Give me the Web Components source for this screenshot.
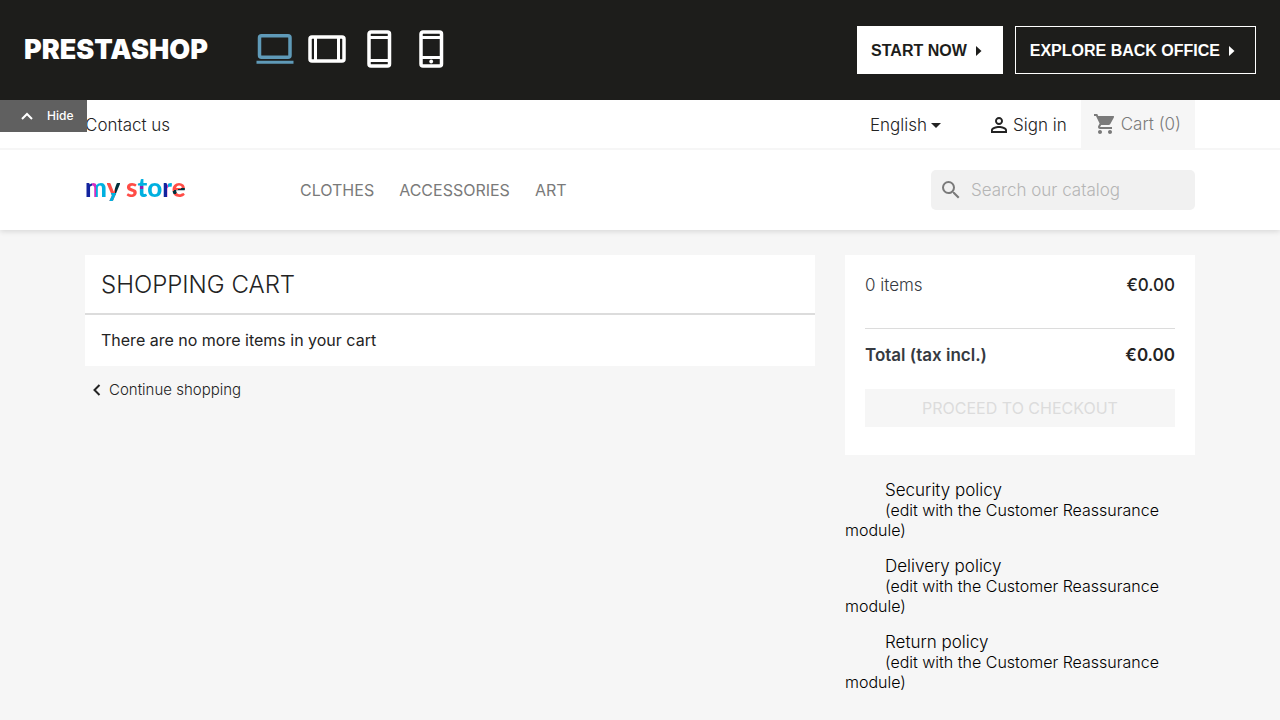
<!DOCTYPE html>
<html lang="en">
<head>
<meta charset="utf-8">
<meta name="viewport" content="width=device-width, initial-scale=1">
<title>Cart - My Store</title>
<style>
  body {
    --ink: #232323;
    --muted: #7a7a7a;
    --page: #f6f6f6;
    margin: 0;
    min-height: 100vh;
    background: var(--page);
    color: var(--ink);
    font: 300 17px/20px Inter, "Noto Sans", sans-serif;
  }
</style>
</head>
<body>
<demo-banner></demo-banner>
<store-header></store-header>
<cart-page></cart-page>

<script>
const define = (name, html) => customElements.define(name, class extends HTMLElement {
  constructor() {
    super();
    const template = document.createElement('template');
    template.innerHTML = html;
    this.attachShadow({ mode: 'open' }).append(template.content.cloneNode(true));
  }
});

define('page-container', `
  <style>
    :host { display: block; box-sizing: border-box; width: 100%; max-width: 1140px; margin: 0 auto; padding: 0 15px; }
  </style>
  <slot></slot>`);

define('demo-link', `
  <style>
    :host { display: block; }
    a { display: flex; align-items: center; gap: 9px; box-sizing: border-box; height: 48px; padding: 2px 20px 0 14px;
        border: 1px solid #fff; color: #fff; text-decoration: none; white-space: nowrap;
        font: bold 16px/20px "Liberation Sans", Arial, sans-serif; }
    :host([primary]) a { background: #fff; color: #1d1d1b; padding-left: 13px; }
    svg { display: block; }
  </style>
  <a href="#"><slot></slot><svg width="6" height="10" viewBox="0 0 6 10" aria-hidden="true"><path d="M0 0l5.5 5L0 10z" fill="currentColor"/></svg></a>`);

define('device-picker', `
  <style>
    :host { display: flex; align-items: center; gap: 12px; }
    button { display: block; width: 40px; height: 40px; padding: 0; border: 0; background: none; color: #fff; }
    button[aria-pressed="true"] { color: #5f9ab8; }
    svg { display: block; fill: none; stroke: currentColor; stroke-width: 3; }
    rect { stroke-width: 3.5; }
  </style>
  <button type="button" aria-label="Desktop" aria-pressed="true">
    <svg width="40" height="40" viewBox="0 0 40 40"><rect x="4.500" y="5.700" width="30.500" height="21.500" rx="2"/><path d="M1.500 32.300h37"/></svg>
  </button>
  <button type="button" aria-label="Tablet landscape">
    <svg width="40" height="40" viewBox="0 0 40 40"><rect x="3" y="7" width="34" height="24" rx="2"/><path d="M8.500 7v24M31.500 7v24"/></svg>
  </button>
  <button type="button" aria-label="Tablet portrait">
    <svg width="40" height="40" viewBox="0 0 40 40"><rect x="10" y="2" width="20.500" height="34" rx="2"/><path d="M10 7.500h20M10 30.500h20"/></svg>
  </button>
  <button type="button" aria-label="Mobile">
    <svg width="40" height="40" viewBox="0 0 40 40"><rect x="10" y="2" width="20.500" height="34" rx="2"/><path d="M10 7.500h20M10 27.500h20"/><circle cx="20.200" cy="31.500" r="1.900" fill="currentColor" stroke="none"/></svg>
  </button>`);

define('demo-banner', `
  <style>
    :host { display: block; position: relative; z-index: 1; background: #1d1d1b; color: #fff; }
    header { display: flex; align-items: center; box-sizing: border-box; min-height: 100px; padding: 0 24px; }
    .brand { color: inherit; text-decoration: none; font-size: 27px; font-weight: 900; line-height: 32px; }
    device-picker { margin-left: 47px; }
    nav { display: flex; gap: 12px; margin-left: auto; }
    .hide { position: absolute; left: 0; top: 100%; display: flex; align-items: center; gap: 14px;
            width: 87px; height: 32px; padding: 0 0 0 21px; border: 0; background: #606060; color: #fff;
            font: 500 12px/16px Inter, sans-serif; }
  </style>
  <header>
    <a class="brand" href="#">PRESTASHOP</a>
    <device-picker></device-picker>
    <nav aria-label="Demo">
      <demo-link primary>START NOW</demo-link>
      <demo-link>EXPLORE BACK OFFICE</demo-link>
    </nav>
  </header>
  <button class="hide" type="button">
    <svg width="12" height="8" viewBox="0 0 12 8" aria-hidden="true"><path d="M1 7l5-5 5 5" fill="none" stroke="currentColor" stroke-width="2"/></svg>Hide
  </button>`);

define('top-bar', `
  <style>
    :host { display: block; border-bottom: 2px solid var(--page); }
    .row { display: flex; align-items: center; height: 48px; }
    a { color: inherit; text-decoration: none; }
    .contact, .lang, .user { padding-top: 2px; }
    .end { display: flex; align-items: center; height: 100%; margin-left: auto; }
    .lang { display: flex; align-items: center; gap: 4px; margin-right: 49px; }
    select { appearance: none; field-sizing: content; padding: 0; border: 0; background: none; color: inherit; font: inherit; }
    .user { display: flex; align-items: center; gap: 5px; margin-right: 14px; }
    .cart { display: flex; align-items: center; gap: 4px; height: 100%; padding: 0 14px 0 12px; background: var(--page); color: var(--muted); }
    svg { display: block; fill: currentColor; }
  </style>
  <page-container>
    <div class="row">
      <a class="contact" href="#">Contact us</a>
      <div class="end">
        <div class="lang">
          <select aria-label="Language"><option>English</option></select>
          <svg width="10" height="5" viewBox="0 0 10 5" aria-hidden="true"><path d="M0 0h10L5 5z"/></svg>
        </div>
        <a class="user" href="#">
          <svg width="18" height="18" viewBox="3 3 18 18" aria-hidden="true"><path d="M12 5.900a2.100 2.100 0 1 1 0 4.200 2.100 2.100 0 0 1 0-4.200m0 9c2.970 0 6.100 1.460 6.100 2.100v1.100H5.900V17c0-.64 3.130-2.100 6.100-2.100M12 4C9.790 4 8 5.790 8 8s1.790 4 4 4 4-1.790 4-4-1.790-4-4-4zm0 9c-2.670 0-8 1.340-8 4v3h16v-3c0-2.660-5.330-4-8-4z"/></svg>
          Sign in
        </a>
        <a class="cart" href="#">
          <svg width="24" height="24" viewBox="0 0 24 24" aria-hidden="true"><path d="M7 18c-1.100 0-1.990.9-1.990 2S5.900 22 7 22s2-.9 2-2-.9-2-2-2zM1 2v2h2l3.600 7.590-1.350 2.450c-.16.28-.25.61-.25.960 0 1.100.9 2 2 2h12v-2H7.420c-.14 0-.25-.11-.25-.25l.03-.12.900-1.630h7.450c.75 0 1.410-.41 1.750-1.030l3.580-6.490A1 1 0 0 0 20 4H5.210l-.94-2H1zm16 16c-1.100 0-1.990.9-1.990 2s.89 2 1.990 2 2-.9 2-2-.9-2-2-2z"/></svg>
          Cart (0)
        </a>
      </div>
    </div>
  </page-container>`);

define('store-logo', `
  <style>
    :host { display: block; }
    a { display: block; padding-bottom: 6px; text-decoration: none; white-space: nowrap; font: 900 26px/32px Lato, sans-serif; }
    span { color: transparent; background-clip: text; -webkit-background-clip: text; }
    .m { background-image: linear-gradient(90deg, #12239e 30%, #d12fc0 30% 52%, #00b0e0 52%); }
    .y { background-image: linear-gradient(0deg, #00b0e0 30%, transparent 30%), linear-gradient(90deg, #ff4c46 60%, #01303b 60%); }
    .s { background-image: linear-gradient(#ff4c46, #ff4c46); }
    .t { background-image: linear-gradient(#00b0e0 46%, #8a1fb0 46% 56%, #00b0e0 56%); }
    .o { background-image: linear-gradient(#00b0e0, #00b0e0); }
    .r { background-image: linear-gradient(90deg, #12239e 55%, #d12fc0 55% 65%, #00b0e0 65%); }
    .e { background-image: linear-gradient(165deg, #ff4c46 56%, #01303b 56% 66%, #ff4c46 66%); }
  </style>
  <a href="#" aria-label="my store"><span class="m">m</span><span class="y">y</span> <span class="s">s</span><span class="t">t</span><span class="o">o</span><span class="r">r</span><span class="e">e</span></a>`);

define('search-box', `
  <style>
    :host { display: block; min-width: 0; }
    label { display: flex; align-items: center; gap: 8px; box-sizing: border-box; height: 40px; padding: 0 8px; border-radius: 5px; background: #f1f1f1; color: var(--muted); }
    svg { display: block; flex: none; fill: currentColor; }
    input { flex: 1; min-width: 0; padding: 0; border: 0; outline: 0; background: none; color: var(--ink); font: inherit; }
    input::placeholder { color: #b5b5b5; opacity: 1; }
  </style>
  <label>
    <svg width="24" height="24" viewBox="0 0 24 24" aria-hidden="true"><path d="M15.500 14h-.79l-.28-.27A6.470 6.470 0 0 0 16 9.500 6.500 6.500 0 1 0 9.500 16c1.610 0 3.090-.59 4.230-1.570l.27.28v.79l5 4.990L20.490 19l-4.990-5zm-6 0C7.010 14 5 11.990 5 9.500S7.010 5 9.500 5 14 7.010 14 9.500 11.990 14 9.500 14z"/></svg>
    <input type="text" placeholder="Search our catalog" aria-label="Search">
  </label>`);

define('store-header', `
  <style>
    :host { display: block; background: #fff; box-shadow: 0 2px 5px 0 rgba(0,0,0,.11); }
    .row { display: flex; align-items: center; min-height: 80px; }
    store-logo { flex: 0 0 215px; }
    nav { display: flex; gap: 25px; }
    nav a { color: var(--muted); text-decoration: none; font-size: 16px; font-weight: 400; }
    search-box { flex: 0 1 264px; margin-left: auto; }
  </style>
  <top-bar></top-bar>
  <page-container>
    <div class="row">
      <store-logo></store-logo>
      <nav aria-label="Categories"><a href="#">CLOTHES</a><a href="#">ACCESSORIES</a><a href="#">ART</a></nav>
      <search-box></search-box>
    </div>
  </page-container>`);

define('cart-overview', `
  <style>
    :host { display: block; }
    section { background: #fff; }
    h1 { margin: 0; padding: 15px 16px 13px; border-bottom: 2px solid #dcdcdc; font-size: 24px; font-weight: 300; line-height: 30px; }
    p { margin: 0; padding: 15px 16px 16px; font-size: 16px; font-weight: 400; }
    a { display: inline-flex; align-items: center; gap: 8px; margin: 14px 0 0 8px; color: inherit; text-decoration: none; font-size: 15px; }
    svg { display: block; }
  </style>
  <section>
    <h1>SHOPPING CART</h1>
    <p>There are no more items in your cart</p>
  </section>
  <a href="#"><svg width="8" height="12" viewBox="0 0 8 12" aria-hidden="true"><path d="M6.500 1L1.500 6l5 5" fill="none" stroke="currentColor" stroke-width="2"/></svg>Continue shopping</a>`);

define('cart-summary', `
  <style>
    :host { display: block; padding: 20px 20px 28px; background: #fff; }
    dl { margin: 0; }
    div { display: flex; justify-content: space-between; }
    .items { padding-bottom: 33px; border-bottom: 1px solid #dcdcdc; }
    .total { padding: 16px 0 24px; font-weight: 600; }
    dt { color: #363a41; }
    dd { margin: 0; font-weight: 500; }
    .total dd { font-weight: 600; }
    button { display: block; width: 100%; height: 38px; padding: 0; border: 0; background: var(--page); color: #dcdcdc; font: inherit; font-size: 16px; font-weight: 400; }
  </style>
  <dl>
    <div class="items"><dt>0 items</dt><dd>€0.00</dd></div>
    <div class="total"><dt>Total (tax incl.)</dt><dd>€0.00</dd></div>
  </dl>
  <button type="button" disabled>PROCEED TO CHECKOUT</button>`);

define('policy-note', `
  <style>
    :host { display: block; color: #000; }
    .icon { float: left; width: 40px; height: 40px; }
    p { margin: 0; font-size: 16px; }
    .title { font-size: 17px; }
  </style>
  <span class="icon"></span>
  <p class="title"><slot></slot></p>
  <p>(edit with the Customer Reassurance module)</p>`);

define('cart-page', `
  <style>
    :host { display: block; padding: 25px 0; }
    .grid { display: grid; grid-template-columns: minmax(0, 73fr) minmax(0, 35fr); gap: 30px; align-items: start; }
    .policies { display: grid; gap: 16px; margin-top: 25px; }
  </style>
  <page-container>
    <div class="grid">
      <cart-overview></cart-overview>
      <aside>
        <cart-summary></cart-summary>
        <div class="policies">
          <policy-note>Security policy</policy-note>
          <policy-note>Delivery policy</policy-note>
          <policy-note>Return policy</policy-note>
        </div>
      </aside>
    </div>
  </page-container>`);
</script>
</body>
</html>
